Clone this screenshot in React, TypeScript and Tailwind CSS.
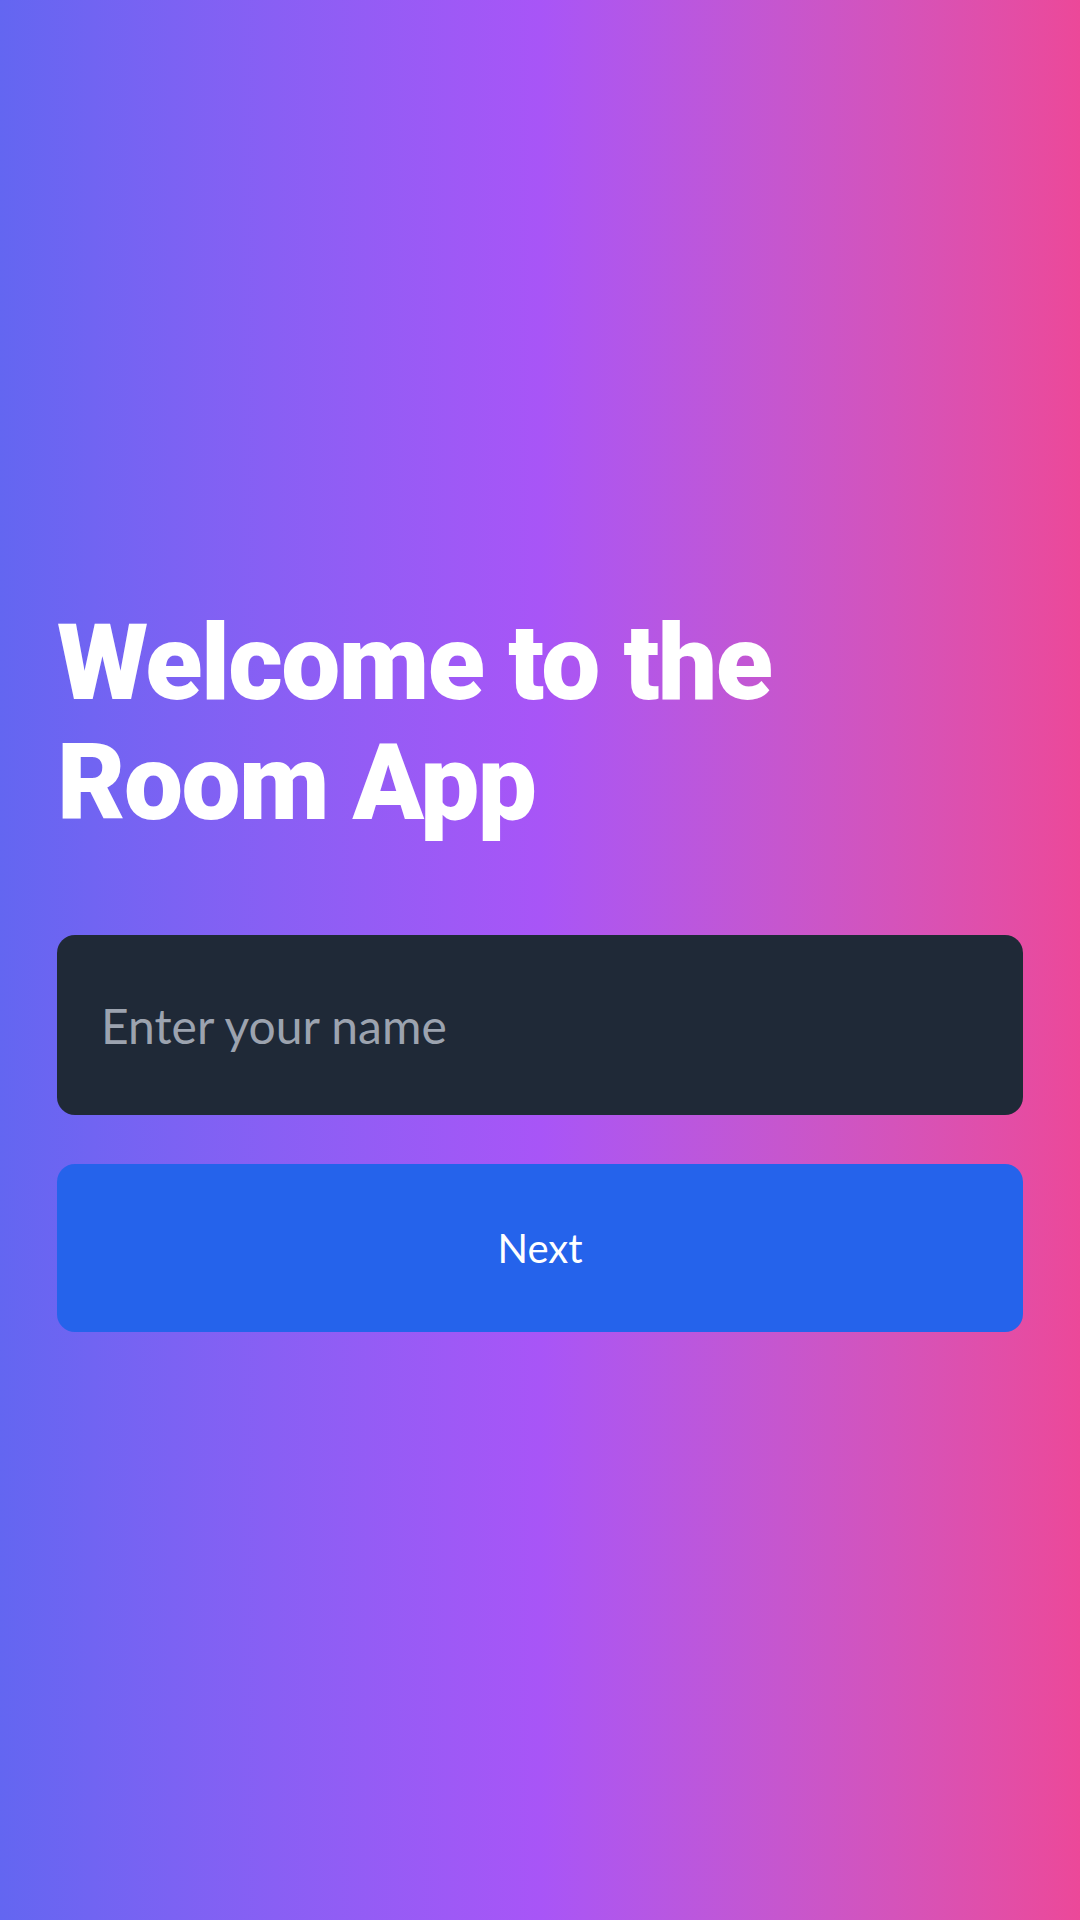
export default function App() {
  return (
    <div className="min-h-screen w-full flex flex-col justify-center px-[57px] pt-[16px] bg-gradient-to-r from-[#6366f1] via-[#a855f7] to-[#ec4899]">
      {/* Heading */}
      <h1 className="text-white font-black text-[105px] leading-[120px] tracking-[-1.5px] font-['Roboto',sans-serif]">
        Welcome to the
        <br />
        Room App
      </h1>

      {/* Name input */}
      <input
        type="text"
        placeholder="Enter your name"
        className="mt-[91px] h-[180px] w-full rounded-[18px] bg-[#1f2937] px-[44px] text-[48px] text-white placeholder:text-[#9ca3af] outline-none font-['Lato',sans-serif]"
      />

      {/* Next button */}
      <button className="mt-[49px] h-[168px] w-full rounded-[18px] bg-[#2563eb] text-white text-[40px] font-['Lato',sans-serif]">
        Next
      </button>
    </div>
  );
}
